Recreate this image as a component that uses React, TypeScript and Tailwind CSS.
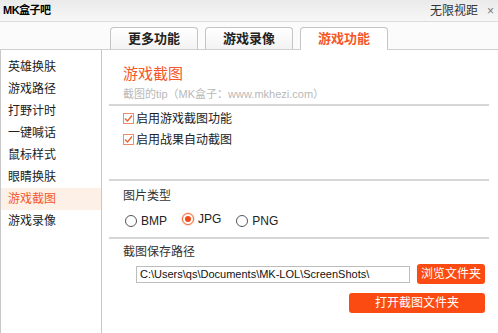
const menu = ["英雄换肤", "游戏路径", "打野计时", "一键喊话", "鼠标样式", "眼睛换肤", "游戏截图", "游戏录像"];
const tabs = ["更多功能", "游戏录像", "游戏功能"];

function Check({ label }: { label: string }) {
  return (
    <div className="flex items-center h-[21px]">
      <span className="w-[11px] h-[11px] border border-[#ef8a6a] bg-white flex items-center justify-center">
        <svg width="9" height="9" viewBox="0 0 9 9">
          <path d="M1 4.5 L3.5 7 L8 1.5" fill="none" stroke="#f0602e" strokeWidth="1.3" />
        </svg>
      </span>
      <span className="ml-[2px] text-[12px] text-[#222]">{label}</span>
    </div>
  );
}

function Radio({ label, on }: { label: string; on?: boolean }) {
  return (
    <div className={`flex items-center ${on ? "-mt-[5px]" : ""}`}>
      {on ? (
        <span className="w-[12px] h-[12px] rounded-full border border-[#f36a3c] bg-white flex items-center justify-center shadow-[0_0_2px_#f8a080]">
          <span className="w-[6px] h-[6px] rounded-full bg-[#f24a16]" />
        </span>
      ) : (
        <span className="w-[12px] h-[12px] rounded-full border border-[#555] bg-white" />
      )}
      <span className="ml-[4px] text-[12px] text-[#222]">{label}</span>
    </div>
  );
}

export default function App() {
  return (
    <div
      className="w-[498px] h-[333px] bg-white overflow-hidden flex flex-col"
      style={{ fontFamily: '"Liberation Sans", "Noto Sans CJK SC", sans-serif' }}
    >
      <div className="h-[22px] flex items-center justify-between pl-[3px] pr-[4px] bg-gradient-to-b from-[#eaeaea] to-[#f7f7f7] border-b border-[#dcdcdc]">
        <span className="text-[11px] font-bold text-black tracking-[-0.5px]">MK盒子吧</span>
        <div className="flex items-center gap-[9px]">
          <span className="text-[12px] text-[#333]">无限视距</span>
          <span className="text-[12px] text-[#777]">×</span>
        </div>
      </div>

      <div className="h-[28px] flex items-end pl-[110px] gap-[7px] bg-[#fbfbfb] border-b border-[#cfcfcf]">
        {tabs.map((t, i) => (
          <div
            key={t}
            className={`w-[88px] h-[22px] flex items-center justify-center rounded-t-[4px] border border-[#c4c4c4] text-[13px] font-bold ${
              i === 2
                ? "bg-white text-[#f4572a] border-b-white -mb-px h-[23px]"
                : "bg-gradient-to-b from-white to-[#f3f3f3] border-b-0 text-[#222]"
            }`}
          >
            {t}
          </div>
        ))}
      </div>

      <div className="flex flex-1">
        <div className="w-[102px] border-l border-r border-[#c8c8c8] pt-[6px]">
          {menu.map((m) => (
            <div
              key={m}
              className={`h-[22px] flex items-center pl-[7px] text-[12px] ${
                m === "游戏截图" ? "bg-[#fdf0e6] text-[#f4572a]" : "text-[#222]"
              }`}
            >
              {m}
            </div>
          ))}
        </div>

        <div className="flex-1 pl-[7px] pr-[9px]">
          <div className="pl-[14px] pt-[14px]">
            <div className="text-[15px] leading-[20px] text-[#f4572a]">游戏截图</div>
            <div className="mt-[3px] text-[11px] leading-[14px] text-[#b8b8b8]">截图的tip（MK盒子：www.mkhezi.com）</div>
          </div>
          <div className="mt-[3px] border-t-2 border-[#d6d6d6]" />
          <div className="pl-[14px] pt-[2px]">
            <Check label="启用游戏截图功能" />
            <Check label="启用战果自动截图" />
          </div>
          <div className="mt-[29px] border-t-2 border-[#d6d6d6]" />
          <div className="pl-[14px] pt-[7px]">
            <div className="text-[12px] leading-[16px] text-[#333]">图片类型</div>
            <div className="flex items-center mt-[9px] pl-[2px] gap-[15px] h-[16px]">
              <Radio label="BMP" />
              <Radio label="JPG" on />
              <Radio label="PNG" />
            </div>
          </div>
          <div className="mt-[8px] border-t-2 border-[#d6d6d6]" />
          <div className="pl-[14px] pt-[5px] pr-[4px]">
            <div className="text-[12px] leading-[16px] text-[#333]">截图保存路径</div>
            <div className="flex items-center mt-[4px] pl-[13px]">
              <div className="w-[274px] h-[17px] border border-[#bdbdbd] flex items-center px-[3px] text-[11px] text-[#111]">
                C:\Users\qs\Documents\MK-LOL\ScreenShots\
              </div>
              <button className="ml-[7px] w-[68px] h-[20px] rounded-[3px] bg-[#fb4a12] text-white text-[12px]">
                浏览文件夹
              </button>
            </div>
            <div className="flex justify-end mt-[9px]">
              <button className="w-[136px] h-[20px] rounded-[3px] bg-[#fb4a12] text-white text-[12px]">
                打开截图文件夹
              </button>
            </div>
          </div>
        </div>
      </div>
    </div>
  );
}
